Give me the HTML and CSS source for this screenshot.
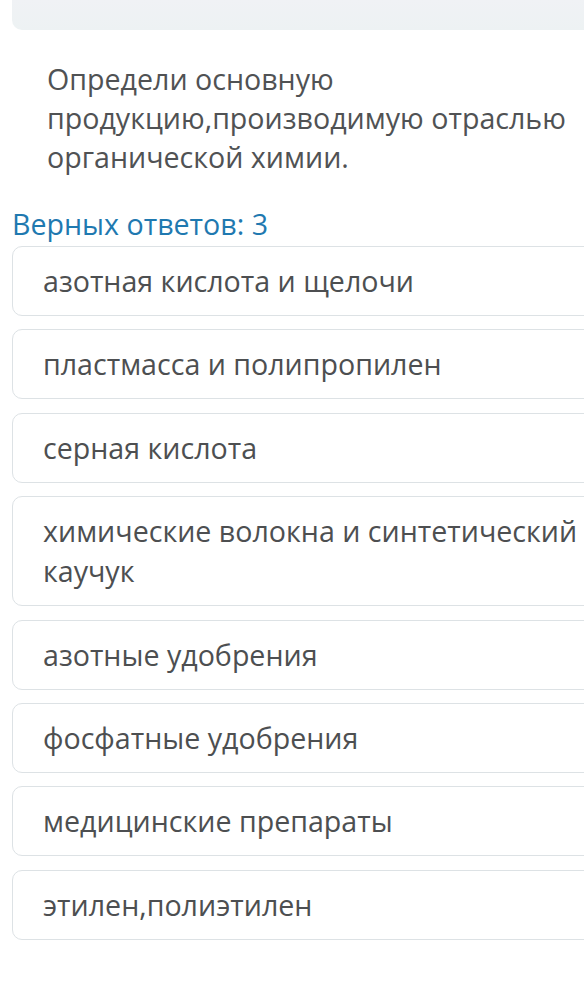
FILE: index.html
```html
<!DOCTYPE html>
<html lang="ru">
<head>
    <meta charset="UTF-8">
    <meta name="viewport" content="width=device-width, initial-scale=1.0">
    <title>Задание</title>
    <link rel="stylesheet" href="styles.css">
</head>
<body>
    <div class="task">
        <div class="task-header"></div>

        <div class="question">
            Определи основную продукцию,производимую отраслью органической химии.
        </div>

        <div class="answers-label">Верных ответов: 3</div>

        <div class="options">
            <div class="option">азотная кислота и щелочи</div>
            <div class="option">пластмасса и полипропилен</div>
            <div class="option">серная кислота</div>
            <div class="option">химические волокна и синтетический каучук</div>
            <div class="option">азотные удобрения</div>
            <div class="option">фосфатные удобрения</div>
            <div class="option">медицинские препараты</div>
            <div class="option">этилен,полиэтилен</div>
        </div>
    </div>
</body>
</html>
```

FILE: styles.css
```css
* {
    margin: 0;
    padding: 0;
    box-sizing: border-box;
}

body {
    background: #fff;
    font-family: 'Open Sans', 'Noto Sans', sans-serif;
    color: #4b4d4f;
    overflow: hidden;
}

.task {
    width: 620px;
    padding-left: 12px;
}

.task-header {
    height: 30px;
    background: linear-gradient(180deg, #f0f2f5, #edf2f3);
    border-radius: 0 0 0 10px;
}

.question {
    margin-top: 29px;
    padding: 0 35px;
    font-size: 28.6px;
    line-height: 39px;
    color: #505254;
}

.answers-label {
    margin-top: 28px;
    font-size: 28.6px;
    line-height: 39px;
    color: #1f79b0;
}

.options {
    margin-top: 3px;
    display: flex;
    flex-direction: column;
    gap: 13.4px;
}

.option {
    padding: 14px 30px;
    border: 1px solid #dde2e5;
    border-radius: 10px;
    font-size: 28.6px;
    line-height: 40px;
    color: #4d4f51;
}
```
